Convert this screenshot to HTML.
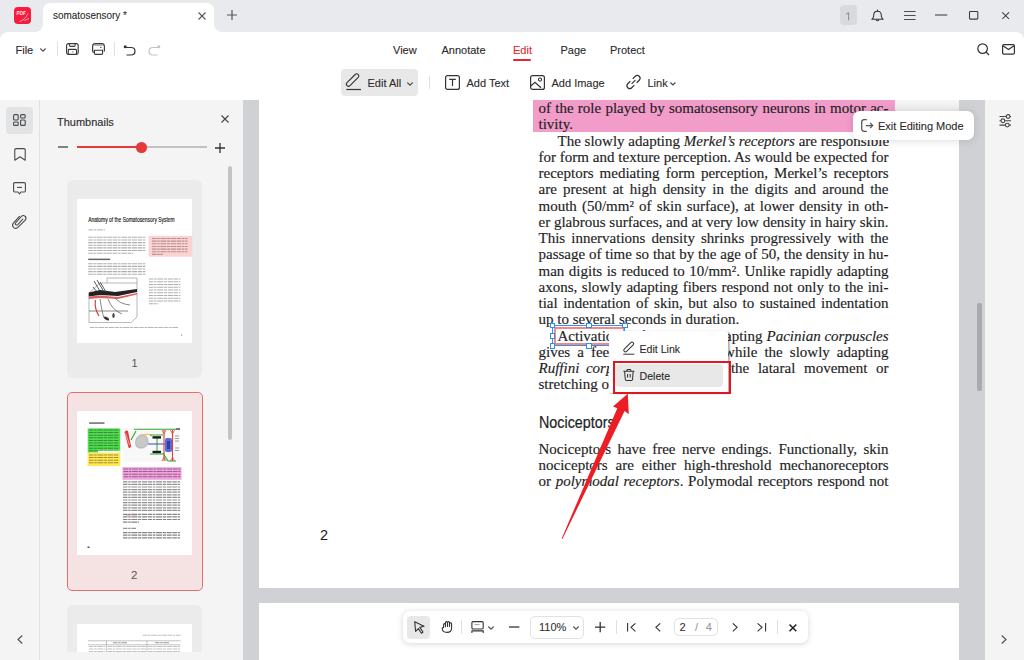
<!DOCTYPE html>
<html><head><meta charset="utf-8">
<style>
*{box-sizing:border-box;margin:0;padding:0}
html,body{width:1024px;height:660px;overflow:hidden;background:#e9eaed;font-family:"Liberation Sans",sans-serif;color:#333}
.a{position:absolute}
svg{position:absolute;overflow:visible}
.t{position:absolute;white-space:pre;font-size:11px;line-height:13px;color:#2a2a2a;-webkit-text-stroke:0.1px currentColor}
.ln{position:absolute;left:538.5px;width:350px;-webkit-text-stroke:0.15px #1e1e1e;white-space:nowrap;font-family:"Liberation Serif",serif;font-size:15px;line-height:18px;color:#1e1e1e;text-align:justify;text-align-last:justify}
.ln.l{text-align:left;text-align-last:left}
i{font-style:italic}
</style></head><body>
<!-- title bar -->
<div class="a" style="left:0;top:0;width:1024px;height:32px;background:#e9eaed"></div>
<!-- logo -->

<!-- tab -->
<div class="a" style="left:43px;top:3px;width:171px;height:30px;background:#fff;border-radius:7px 7px 0 0"></div>
<div class="t" style="left:52.5px;top:9px;font-size:11px;color:#2a2a2a;transform:scaleX(0.9);transform-origin:0 0">somatosensory *</div>

<!-- toolbar white -->
<div class="a" style="left:0;top:32px;width:1024px;height:68px;background:#fff;border-radius:8px 8px 0 0"></div>
<div class="a" style="left:0;top:99.5px;width:1024px;height:1px;background:#e6e6e6"></div>


<!-- tab flare corners -->
<div class="a" style="left:35px;top:24px;width:8px;height:8.5px;background:radial-gradient(circle at 0 0,#e9eaed 7.6px,#fff 8.4px)"></div>
<div class="a" style="left:214px;top:24px;width:8px;height:8.5px;background:radial-gradient(circle at 100% 0,#e9eaed 7.6px,#fff 8.4px)"></div>
<!-- logo detail -->
<svg style="left:13.5px;top:6.5px" width="17" height="17" viewBox="0 0 17 17"><defs><linearGradient id="lg" x1="0" y1="0" x2="1" y2="1"><stop offset="0" stop-color="#ff1a3c"/><stop offset="1" stop-color="#ee1e3e"/></linearGradient></defs><rect x="0" y="0" width="17" height="17" rx="4" fill="url(#lg)"/><text x="2.6" y="7.6" font-family="Liberation Sans" font-size="4.6" font-style="italic" font-weight="bold" fill="#fff" opacity="0.9">PDF</text><path d="M5.5 14.5 Q11 13 14 6.5 M10.5 13.5 L15 11.5" stroke="#fff" stroke-width="0.8" fill="none" opacity="0.75"/></svg>
<!-- tab close -->
<svg style="left:197.5px;top:11.5px" width="8" height="8" viewBox="0 0 8 8"><path d="M0.5 0.5 L7.5 7.5 M7.5 0.5 L0.5 7.5" stroke="#555" stroke-width="1.1"/></svg>
<!-- plus -->
<svg style="left:226.5px;top:10px" width="10" height="10" viewBox="0 0 10 10"><path d="M5 0 V10 M0 5 H10" stroke="#555" stroke-width="1.2"/></svg>
<!-- right titlebar icons -->
<div class="a" style="left:839.7px;top:5.2px;width:17px;height:19.6px;border-radius:4px;background:#d9dadd"></div>
<svg style="left:845px;top:12px" width="6" height="9" viewBox="0 0 6 9"><path d="M3.6 0.4 V8.2 M3.6 0.6 L1.4 2.2" stroke="#8f88b5" stroke-width="1.1" fill="none"/></svg>
<svg style="left:870.5px;top:8.8px" width="13" height="13" viewBox="0 0 13 13"><path d="M0.9 10.2 Q2.6 9 2.7 7 V6.2 Q2.7 2.3 6.5 2.3 Q10.3 2.3 10.3 6.2 V7 Q10.4 9 12.1 10.2 Z" stroke="#333" stroke-width="1.05" fill="none" stroke-linejoin="round"/><path d="M6.5 0.6 V2.3" stroke="#333" stroke-width="1.1"/><path d="M5 11 Q6.5 12.6 8 11" stroke="#333" stroke-width="1.05" fill="none"/></svg>
<svg style="left:903.5px;top:10.9px" width="12" height="10" viewBox="0 0 12 10"><path d="M0 0.5 H11.6 M0 4.55 H11.6 M0 8.55 H11.6" stroke="#4b4f5a" stroke-width="1.05"/></svg>
<svg style="left:935.2px;top:14.2px" width="13" height="2" viewBox="0 0 13 2"><path d="M0 1 H12.3" stroke="#3a3a3a" stroke-width="1.05"/></svg>
<svg style="left:968.9px;top:11px" width="10" height="9" viewBox="0 0 10 9"><rect x="0.5" y="0.5" width="8.3" height="7.6" stroke="#3a3a3a" stroke-width="1.05" fill="none" rx="0.8"/></svg>
<svg style="left:1001.8px;top:11.9px" width="8" height="8" viewBox="0 0 8 8"><path d="M0.3 0.3 L7 7 M7 0.3 L0.3 7" stroke="#3a3a3a" stroke-width="1.05"/></svg>

<!-- toolbar row 1 -->
<div class="t" style="left:15.5px;top:43.5px">File</div>
<svg style="left:40px;top:48px" width="6" height="4" viewBox="0 0 6 4"><path d="M0.3 0.5 L3 3.2 L5.7 0.5" stroke="#555" stroke-width="1.1" fill="none"/></svg>
<div class="a" style="left:56.5px;top:42px;width:1px;height:13.5px;background:#e0e0e0"></div>
<svg style="left:66.2px;top:43px" width="13" height="12" viewBox="0 0 13 12"><rect x="0.6" y="0.6" width="11.6" height="10.8" rx="1.8" stroke="#3a3a3a" stroke-width="1.15" fill="none"/><path d="M3.5 0.6 V2.6 Q3.5 3.4 4.3 3.4 H8.3 Q9.1 3.4 9.1 2.6 V0.6" stroke="#3a3a3a" stroke-width="1.1" fill="none"/><path d="M2.3 11.4 V7.3 Q2.3 6.4 3.2 6.4 H9.6 Q10.5 6.4 10.5 7.3 V11.4" stroke="#3a3a3a" stroke-width="1.1" fill="none"/><circle cx="6.9" cy="8.8" r="0.6" fill="#555"/></svg>
<svg style="left:92px;top:43px" width="13" height="12" viewBox="0 0 13 12"><path d="M2.4 9.2 H1.9 Q0.6 9.2 0.6 7.9 V3.4 Q0.6 0.6 3.4 0.6 H9.6 Q12.4 0.6 12.4 3.4 V8.6" stroke="#3a3a3a" stroke-width="1.15" fill="none"/><path d="M2.4 2.1 H10.6" stroke="#777" stroke-width="1"/><path d="M2.4 7.2 H10.6 V10.3 Q10.6 11.4 9.5 11.4 H3.5 Q2.4 11.4 2.4 10.3 Z" stroke="#3a3a3a" stroke-width="1.15" fill="none"/><rect x="8" y="3.9" width="1.6" height="0.9" fill="#3a3a3a"/></svg>
<div class="a" style="left:113.5px;top:42px;width:1px;height:13.5px;background:#e0e0e0"></div>
<svg style="left:122.5px;top:44.5px" width="13" height="11" viewBox="0 0 13 11"><circle cx="2.2" cy="1.7" r="1.5" fill="#333"/><path d="M2.2 2.5 H8 Q12 2.5 12 6.3 Q12 10 8 10 H3.5" stroke="#333" stroke-width="1.2" fill="none"/></svg>
<svg style="left:147.5px;top:44.5px" width="13" height="11" viewBox="0 0 13 11"><circle cx="10.8" cy="1.7" r="1.5" fill="#c4c4c4"/><path d="M10.8 2.5 H5 Q1 2.5 1 6.3 Q1 10 5 10 H9.5" stroke="#c4c4c4" stroke-width="1.2" fill="none"/></svg>

<div class="t" style="left:393px;top:43.5px">View</div>
<div class="t" style="left:441.5px;top:43.5px">Annotate</div>
<div class="t" style="left:513px;top:43.5px;color:#e5262e">Edit</div>
<div class="a" style="left:513px;top:59px;width:17.5px;height:2.3px;border-radius:1px;background:#e5262e"></div>
<div class="t" style="left:560.5px;top:43.5px">Page</div>
<div class="t" style="left:610px;top:43.5px">Protect</div>
<svg style="left:976.5px;top:42.8px" width="13" height="13" viewBox="0 0 13 13"><circle cx="5.6" cy="5.6" r="4.8" stroke="#333" stroke-width="1.2" fill="none"/><path d="M9 9 L12 12" stroke="#333" stroke-width="1.2"/></svg>
<svg style="left:1002px;top:43.5px" width="13" height="11" viewBox="0 0 13 11"><rect x="0.6" y="0.6" width="11.8" height="9.5" rx="1.3" stroke="#333" stroke-width="1.2" fill="none"/><path d="M1 1.8 L6.5 5.5 L12 1.8" stroke="#333" stroke-width="1.2" fill="none"/></svg>

<!-- toolbar row 2 -->
<div class="a" style="left:341px;top:69.3px;width:77px;height:26.5px;border-radius:4px;background:#e8e8e8"></div>
<svg style="left:346px;top:75px" width="16" height="15" viewBox="0 0 16 15"><rect x="-1.3" y="3" width="15.8" height="4.2" rx="2.1" transform="rotate(-45 6.6 5.1)" stroke="#333" stroke-width="1.1" fill="none"/><path d="M0.3 14.5 H15" stroke="#333" stroke-width="1.2"/></svg>
<div class="t" style="left:367.5px;top:77px">Edit All</div>
<svg style="left:406.5px;top:81.5px" width="6" height="4" viewBox="0 0 6 4"><path d="M0.3 0.5 L3 3.2 L5.7 0.5" stroke="#555" stroke-width="1.1" fill="none"/></svg>
<div class="a" style="left:428.5px;top:76px;width:1px;height:13px;background:#e0e0e0"></div>
<svg style="left:445px;top:75px" width="15" height="15" viewBox="0 0 15 15"><rect x="0.6" y="0.6" width="13.8" height="13.8" rx="2" stroke="#333" stroke-width="1.2" fill="none"/><path d="M4.2 4.3 H10.8 M7.5 4.3 V11" stroke="#333" stroke-width="1.2"/></svg>
<div class="t" style="left:466.5px;top:77px">Add Text</div>
<svg style="left:530px;top:75px" width="15" height="15" viewBox="0 0 15 15"><rect x="0.6" y="0.6" width="13.8" height="13.8" rx="2" stroke="#333" stroke-width="1.2" fill="none"/><circle cx="10" cy="4.6" r="1.6" stroke="#333" stroke-width="1.1" fill="none"/><path d="M0.8 11 L5 7.3 L11 12.8" stroke="#333" stroke-width="1.2" fill="none"/></svg>
<div class="t" style="left:551.5px;top:77px">Add Image</div>
<svg style="left:626px;top:75.4px" width="15" height="14" viewBox="0 0 15 14"><g transform="rotate(-45 7.5 7)" stroke="#333" stroke-width="1.2" fill="none"><path d="M5.8 4.2 H2.2 a2.8 2.8 0 0 0 0 5.6 H5.8"/><path d="M9.2 4.2 H12.8 a2.8 2.8 0 0 1 0 5.6 H9.2"/><path d="M4.8 7 H10.2"/></g></svg>
<div class="t" style="left:647.5px;top:77px">Link</div>
<svg style="left:669.8px;top:81.8px" width="6" height="4" viewBox="0 0 6 4"><path d="M0.4 0.5 L2.9 3 L5.4 0.5" stroke="#444" stroke-width="1.1" fill="none"/></svg>

<!-- left rail + panel -->
<div class="a" style="left:0;top:100px;width:243px;height:560px;background:#f4f4f4"></div>
<div class="a" style="left:39px;top:100px;width:1px;height:560px;background:#e2e2e2"></div>

<!-- left rail icons -->
<div class="a" style="left:6px;top:107px;width:27px;height:27px;border-radius:4px;background:#e2e3e5"></div>
<svg style="left:13px;top:114.3px" width="13" height="13" viewBox="0 0 13 13"><rect x="0.6" y="0.6" width="4.6" height="5.4" rx="1" stroke="#4a4a4a" stroke-width="1.1" fill="none"/><rect x="7.6" y="0.6" width="4.6" height="3.4" rx="1" stroke="#4a4a4a" stroke-width="1.1" fill="none"/><rect x="0.6" y="8" width="4.6" height="3.4" rx="1" stroke="#4a4a4a" stroke-width="1.1" fill="none"/><rect x="7.6" y="6" width="4.6" height="5.4" rx="1" stroke="#4a4a4a" stroke-width="1.1" fill="none"/></svg>
<svg style="left:13.5px;top:147.5px" width="12" height="13" viewBox="0 0 12 13"><path d="M0.8 1.8 Q0.8 0.6 2 0.6 H10 Q11.2 0.6 11.2 1.8 V12.2 L6 8.8 L0.8 12.2 Z" stroke="#4a4a4a" stroke-width="1.1" fill="none" stroke-linejoin="round"/></svg>
<svg style="left:13px;top:182px" width="13" height="13" viewBox="0 0 13 13"><path d="M1.8 0.6 H11.2 Q12.4 0.6 12.4 1.8 V8.8 Q12.4 10 11.2 10 H8 L6.5 11.8 L5 10 H1.8 Q0.6 10 0.6 8.8 V1.8 Q0.6 0.6 1.8 0.6 Z" stroke="#4a4a4a" stroke-width="1.1" fill="none" stroke-linejoin="round"/><path d="M4 5.4 H9" stroke="#4a4a4a" stroke-width="1.1"/></svg>
<svg style="left:8px;top:208px" width="24" height="26" viewBox="0 0 24 26"><path d="M11.4 8.3 L5.2 15.4 Q3.6 17.8 5.8 19.6 Q8 21.3 10.2 19.2 L17.2 12.2 Q19 10 17 8.2 Q15 6.6 13.2 8.6 L7.6 15 Q6.9 16.2 7.9 16.9 Q8.8 17.6 9.8 16.6 L14.8 11.2" stroke="#4a4a4a" stroke-width="1.1" fill="none" stroke-linecap="round"/></svg>
<svg style="left:17px;top:634.5px" width="6" height="9" viewBox="0 0 6 9"><path d="M5.3 0.5 L1 4.5 L5.3 8.5" stroke="#555" stroke-width="1.2" fill="none"/></svg>

<!-- thumbnails panel -->
<div class="t" style="left:57px;top:116px">Thumbnails</div>
<svg style="left:221px;top:115px" width="8" height="8" viewBox="0 0 8 8"><path d="M0.5 0.5 L7.5 7.5 M7.5 0.5 L0.5 7.5" stroke="#444" stroke-width="1.1"/></svg>
<svg style="left:58px;top:146px" width="11" height="2" viewBox="0 0 11 2"><path d="M0 1 H10" stroke="#444" stroke-width="1.3"/></svg>
<div class="a" style="left:77px;top:146.3px;width:64px;height:2px;background:#e5393b"></div>
<div class="a" style="left:141px;top:146.4px;width:65.5px;height:1.8px;background:#c2c2c2"></div>
<div class="a" style="left:136.2px;top:142.1px;width:10.6px;height:10.6px;border-radius:50%;background:#e5393b"></div>
<svg style="left:215px;top:142.5px" width="10" height="10" viewBox="0 0 10 10"><path d="M5 0 V10 M0 5 H10" stroke="#333" stroke-width="1.3"/></svg>
<div class="a" style="left:227.8px;top:166px;width:4.6px;height:273.5px;border-radius:2.3px;background:#c4c4c4"></div>

<!-- card 1 -->
<div class="a" style="left:67px;top:179.5px;width:135px;height:198px;border-radius:6px;background:#ebebeb"></div>
<div class="a" style="left:77px;top:198.6px;width:115.3px;height:144.2px;background:#fff"></div>
<div class="t" style="left:131.5px;top:356.5px;color:#555;-webkit-text-stroke:0">1</div>
<!-- card 2 -->
<div class="a" style="left:66.5px;top:392px;width:136px;height:199px;border-radius:5px;background:#f5e3e4;border:1.2px solid #e86e6e"></div>
<div class="a" style="left:77px;top:411.3px;width:115.3px;height:144px;background:#fff"></div>
<div class="t" style="left:131px;top:568.5px;font-size:11.5px;color:#555;-webkit-text-stroke:0">2</div>
<!-- card 3 -->
<div class="a" style="left:67px;top:604.6px;width:135px;height:47.7px;border-radius:6px 6px 0 0;background:#ebebeb"></div>
<div class="a" style="left:77px;top:624px;width:115.3px;height:28.3px;background:#fff"></div>

<svg style="left:0;top:0" width="243" height="660" viewBox="0 0 243 660"><text x="88.2" y="222" font-family="Liberation Sans" font-size="6.3" fill="#111" stroke="#111" stroke-width="0.12" textLength="86.5" lengthAdjust="spacingAndGlyphs">Anatomy of the Somatosensory System</text><path d="M88.5 229.85 h16.5" stroke="#999" stroke-width="1.23" stroke-dasharray="4.5 0.7 2.5 0.7 6 0.7 3.2 0.7 5 0.7" opacity="0.62"/><path d="M88.2 237.30 h57.8" stroke="#7d7d7d" stroke-width="1.1" stroke-dasharray="4.5 0.7 2.5 0.7 6 0.7 3.2 0.7 5 0.7" opacity="0.62"/><path d="M88.2 239.95 h57.8" stroke="#7d7d7d" stroke-width="1.1" stroke-dasharray="4.5 0.7 2.5 0.7 6 0.7 3.2 0.7 5 0.7" opacity="0.62"/><path d="M88.2 242.60 h57.8" stroke="#7d7d7d" stroke-width="1.1" stroke-dasharray="4.5 0.7 2.5 0.7 6 0.7 3.2 0.7 5 0.7" opacity="0.62"/><path d="M88.2 245.25 h57.8" stroke="#7d7d7d" stroke-width="1.1" stroke-dasharray="4.5 0.7 2.5 0.7 6 0.7 3.2 0.7 5 0.7" opacity="0.62"/><path d="M88.2 247.90 h57.8" stroke="#7d7d7d" stroke-width="1.1" stroke-dasharray="4.5 0.7 2.5 0.7 6 0.7 3.2 0.7 5 0.7" opacity="0.62"/><path d="M88.2 250.55 h57.8" stroke="#7d7d7d" stroke-width="1.1" stroke-dasharray="4.5 0.7 2.5 0.7 6 0.7 3.2 0.7 5 0.7" opacity="0.62"/><path d="M88.2 253.20 h45.1" stroke="#7d7d7d" stroke-width="1.1" stroke-dasharray="4.5 0.7 2.5 0.7 6 0.7 3.2 0.7 5 0.7" opacity="0.62"/><rect x="148.6" y="235.8" width="43.7" height="20.9" fill="#fdd2d2"/><path d="M152.0 238.50 h35.5" stroke="#8a6a6a" stroke-width="1.14" stroke-dasharray="4.5 0.7 2.5 0.7 6 0.7 3.2 0.7 5 0.7" opacity="0.62"/><path d="M152.0 241.15 h35.5" stroke="#8a6a6a" stroke-width="1.14" stroke-dasharray="4.5 0.7 2.5 0.7 6 0.7 3.2 0.7 5 0.7" opacity="0.62"/><path d="M152.0 243.80 h35.5" stroke="#8a6a6a" stroke-width="1.14" stroke-dasharray="4.5 0.7 2.5 0.7 6 0.7 3.2 0.7 5 0.7" opacity="0.62"/><path d="M152.0 246.45 h35.5" stroke="#8a6a6a" stroke-width="1.14" stroke-dasharray="4.5 0.7 2.5 0.7 6 0.7 3.2 0.7 5 0.7" opacity="0.62"/><path d="M152.0 249.10 h35.5" stroke="#8a6a6a" stroke-width="1.14" stroke-dasharray="4.5 0.7 2.5 0.7 6 0.7 3.2 0.7 5 0.7" opacity="0.62"/><path d="M152.0 251.75 h35.5" stroke="#8a6a6a" stroke-width="1.14" stroke-dasharray="4.5 0.7 2.5 0.7 6 0.7 3.2 0.7 5 0.7" opacity="0.62"/><path d="M152.0 254.40 h10.7" stroke="#8a6a6a" stroke-width="1.14" stroke-dasharray="4.5 0.7 2.5 0.7 6 0.7 3.2 0.7 5 0.7" opacity="0.62"/><rect x="88.2" y="258.6" width="22" height="1.5" fill="#666"/><path d="M88.2 263.75 h57.8" stroke="#7d7d7d" stroke-width="1.1" stroke-dasharray="4.5 0.7 2.5 0.7 6 0.7 3.2 0.7 5 0.7" opacity="0.62"/><path d="M88.2 266.37 h57.8" stroke="#7d7d7d" stroke-width="1.1" stroke-dasharray="4.5 0.7 2.5 0.7 6 0.7 3.2 0.7 5 0.7" opacity="0.62"/><path d="M88.2 268.99 h57.8" stroke="#7d7d7d" stroke-width="1.1" stroke-dasharray="4.5 0.7 2.5 0.7 6 0.7 3.2 0.7 5 0.7" opacity="0.62"/><path d="M88.2 271.61 h57.8" stroke="#7d7d7d" stroke-width="1.1" stroke-dasharray="4.5 0.7 2.5 0.7 6 0.7 3.2 0.7 5 0.7" opacity="0.62"/><path d="M88.2 274.23 h57.8" stroke="#7d7d7d" stroke-width="1.1" stroke-dasharray="4.5 0.7 2.5 0.7 6 0.7 3.2 0.7 5 0.7" opacity="0.62"/><path d="M89 322.5 H131 L137 317 V281 M89 322.5 V293 L100 283 H137 M107 283 V278 H137 V281" stroke="#999" stroke-width="0.7" fill="none"/><path d="M88.8 292.5 L100 290 L115 292 L137 289 L137 292 L118 296 L100 295 L88.8 296.5 Z" fill="#222"/><path d="M88.8 296.5 L100 295.5 L118 297 L137 293 L137 294.5 L118 299 L100 298 L88.8 299 Z" fill="#e06060"/><path d="M94 281 L101 293 M97 280 L104 292 M100 282 L106 292 M93 287 L98 293" stroke="#333" stroke-width="0.8"/><path d="M100 299 Q102 312 104 318 M108 299 Q112 310 122 314 M115 298 Q120 304 130 305 M89 311 H128" stroke="#555" stroke-width="0.7" fill="none"/><ellipse cx="106.5" cy="318.5" rx="3" ry="1.4" fill="#333" transform="rotate(30 106.5 318.5)"/><ellipse cx="113.5" cy="315.5" rx="1.2" ry="2.6" fill="#444"/><path d="M95.5 300 Q94 308 99 316" stroke="#d04040" stroke-width="1.2" fill="none"/><path d="M148.9 279.00 h31.5" stroke="#7d7d7d" stroke-width="1.14" stroke-dasharray="4.5 0.7 2.5 0.7 6 0.7 3.2 0.7 5 0.7" opacity="0.62"/><path d="M148.9 281.75 h31.5" stroke="#7d7d7d" stroke-width="1.14" stroke-dasharray="4.5 0.7 2.5 0.7 6 0.7 3.2 0.7 5 0.7" opacity="0.62"/><path d="M148.9 284.50 h31.5" stroke="#7d7d7d" stroke-width="1.14" stroke-dasharray="4.5 0.7 2.5 0.7 6 0.7 3.2 0.7 5 0.7" opacity="0.62"/><path d="M148.9 287.25 h31.5" stroke="#7d7d7d" stroke-width="1.14" stroke-dasharray="4.5 0.7 2.5 0.7 6 0.7 3.2 0.7 5 0.7" opacity="0.62"/><path d="M148.9 290.00 h31.5" stroke="#7d7d7d" stroke-width="1.14" stroke-dasharray="4.5 0.7 2.5 0.7 6 0.7 3.2 0.7 5 0.7" opacity="0.62"/><path d="M148.9 292.75 h31.5" stroke="#7d7d7d" stroke-width="1.14" stroke-dasharray="4.5 0.7 2.5 0.7 6 0.7 3.2 0.7 5 0.7" opacity="0.62"/><path d="M148.9 295.50 h31.5" stroke="#7d7d7d" stroke-width="1.14" stroke-dasharray="4.5 0.7 2.5 0.7 6 0.7 3.2 0.7 5 0.7" opacity="0.62"/><path d="M148.9 298.25 h31.5" stroke="#7d7d7d" stroke-width="1.14" stroke-dasharray="4.5 0.7 2.5 0.7 6 0.7 3.2 0.7 5 0.7" opacity="0.62"/><path d="M148.9 301.00 h31.5" stroke="#7d7d7d" stroke-width="1.14" stroke-dasharray="4.5 0.7 2.5 0.7 6 0.7 3.2 0.7 5 0.7" opacity="0.62"/><path d="M148.9 303.75 h9.4" stroke="#7d7d7d" stroke-width="1.14" stroke-dasharray="4.5 0.7 2.5 0.7 6 0.7 3.2 0.7 5 0.7" opacity="0.62"/><path d="M89.9 327.55 h88.2" stroke="#8a8a8a" stroke-width="1.04" stroke-dasharray="4.5 0.7 2.5 0.7 6 0.7 3.2 0.7 5 0.7" opacity="0.62"/><rect x="181" y="334.5" width="1.2" height="1.2" fill="#999"/><rect x="89.1" y="422.5" width="15.4" height="1.1" fill="#333"/><rect x="87.7" y="428.4" width="32.6" height="24.2" fill="#4fdc4f"/><path d="M89.0 430.00 h30.0" stroke="#2a5a2a" stroke-width="1.04" stroke-dasharray="4.5 0.7 2.5 0.7 6 0.7 3.2 0.7 5 0.7" opacity="0.62"/><path d="M89.0 432.60 h30.0" stroke="#2a5a2a" stroke-width="1.04" stroke-dasharray="4.5 0.7 2.5 0.7 6 0.7 3.2 0.7 5 0.7" opacity="0.62"/><path d="M89.0 435.20 h30.0" stroke="#2a5a2a" stroke-width="1.04" stroke-dasharray="4.5 0.7 2.5 0.7 6 0.7 3.2 0.7 5 0.7" opacity="0.62"/><path d="M89.0 437.80 h30.0" stroke="#2a5a2a" stroke-width="1.04" stroke-dasharray="4.5 0.7 2.5 0.7 6 0.7 3.2 0.7 5 0.7" opacity="0.62"/><path d="M89.0 440.40 h30.0" stroke="#2a5a2a" stroke-width="1.04" stroke-dasharray="4.5 0.7 2.5 0.7 6 0.7 3.2 0.7 5 0.7" opacity="0.62"/><path d="M89.0 443.00 h30.0" stroke="#2a5a2a" stroke-width="1.04" stroke-dasharray="4.5 0.7 2.5 0.7 6 0.7 3.2 0.7 5 0.7" opacity="0.62"/><path d="M89.0 445.60 h30.0" stroke="#2a5a2a" stroke-width="1.04" stroke-dasharray="4.5 0.7 2.5 0.7 6 0.7 3.2 0.7 5 0.7" opacity="0.62"/><path d="M89.0 448.20 h30.0" stroke="#2a5a2a" stroke-width="1.04" stroke-dasharray="4.5 0.7 2.5 0.7 6 0.7 3.2 0.7 5 0.7" opacity="0.62"/><path d="M89.0 450.80 h30.0" stroke="#2a5a2a" stroke-width="1.04" stroke-dasharray="4.5 0.7 2.5 0.7 6 0.7 3.2 0.7 5 0.7" opacity="0.62"/><rect x="87.7" y="452.6" width="32.6" height="13.5" fill="#ffe850"/><rect x="98" y="450.7" width="22.3" height="2" fill="#fff"/><path d="M89.0 455.00 h30.0" stroke="#6a5a2a" stroke-width="1.04" stroke-dasharray="4.5 0.7 2.5 0.7 6 0.7 3.2 0.7 5 0.7" opacity="0.62"/><path d="M89.0 457.60 h30.0" stroke="#6a5a2a" stroke-width="1.04" stroke-dasharray="4.5 0.7 2.5 0.7 6 0.7 3.2 0.7 5 0.7" opacity="0.62"/><path d="M89.0 460.20 h30.0" stroke="#6a5a2a" stroke-width="1.04" stroke-dasharray="4.5 0.7 2.5 0.7 6 0.7 3.2 0.7 5 0.7" opacity="0.62"/><path d="M89.0 462.80 h30.0" stroke="#6a5a2a" stroke-width="1.04" stroke-dasharray="4.5 0.7 2.5 0.7 6 0.7 3.2 0.7 5 0.7" opacity="0.62"/><rect x="87.7" y="464" width="4" height="2" fill="#ffe850"/><rect x="123" y="428.4" width="57.4" height="33.2" fill="#f8f8f8"/>
<path d="M124.5 432 Q126 429.5 128 431 L131 446 Q130.5 449 128.5 447.5 Z" fill="#e03a3a"/>
<path d="M125.5 433 L129.5 445" stroke="#fff" stroke-width="0.5"/>
<path d="M131 440 L136 431 M134 429.3 H176" stroke="#2fa82f" stroke-width="1.1" fill="none"/>
<path d="M136 446 Q134 438 140 435 Q146 433 148 440 Q149 446 143 448 Q138 449 136 446 Z" fill="#c8c8c8" stroke="#888" stroke-width="0.4"/>
<path d="M141 437 Q147 432 152 436" stroke="#e8c070" stroke-width="1.2" fill="none"/>
<path d="M150 435 H163 M150 454 H163 M157 436 V453" stroke="#2fa82f" stroke-width="1" fill="none"/>
<rect x="152.5" y="436.2" width="8.5" height="2.4" fill="#1a1a1a"/><rect x="152.5" y="450.8" width="8.5" height="2.4" fill="#1a1a1a"/>
<path d="M148 444 H165" stroke="#3a4ab8" stroke-width="1"/>
<rect x="165" y="438" width="7" height="14" rx="2" fill="#5a6ad8"/>
<rect x="167" y="441" width="3" height="8" fill="#3040a0"/>
<path d="M164 430 V461 M172.5 430 V461" stroke="#d84040" stroke-width="1.1"/>
<path d="M162 430 L164 434 L166 430 M170.5 430 L172.5 434 L174.5 430 M162 461 L164 457 L166 461 M170.5 461 L172.5 457 L174.5 461" stroke="#e05050" stroke-width="0.8" fill="none"/>
<path d="M163 453 L168 461 H176" stroke="#2fa82f" stroke-width="1.1" fill="none"/>
<path d="M175 436 h4 M175 438.5 h4 M175 441 h4 M175 448 h4 M175 450.5 h4" stroke="#777" stroke-width="0.7"/>
<rect x="176" y="428.4" width="4" height="1.2" fill="#222"/>
<rect x="122.5" y="467.2" width="59" height="12.6" fill="#f3a2de"/><path d="M123.5 469.00 h57.0" stroke="#5a3a5a" stroke-width="1.04" stroke-dasharray="4.5 0.7 2.5 0.7 6 0.7 3.2 0.7 5 0.7" opacity="0.62"/><path d="M123.5 471.60 h57.0" stroke="#5a3a5a" stroke-width="1.04" stroke-dasharray="4.5 0.7 2.5 0.7 6 0.7 3.2 0.7 5 0.7" opacity="0.62"/><path d="M123.5 474.20 h57.0" stroke="#5a3a5a" stroke-width="1.04" stroke-dasharray="4.5 0.7 2.5 0.7 6 0.7 3.2 0.7 5 0.7" opacity="0.62"/><path d="M123.5 476.80 h57.0" stroke="#5a3a5a" stroke-width="1.04" stroke-dasharray="4.5 0.7 2.5 0.7 6 0.7 3.2 0.7 5 0.7" opacity="0.62"/><path d="M123.0 481.80 h57.6" stroke="#4a4a4a" stroke-width="1.23" stroke-dasharray="4.5 0.7 2.5 0.7 6 0.7 3.2 0.7 5 0.7" opacity="0.62"/><path d="M123.0 484.40 h57.6" stroke="#4a4a4a" stroke-width="1.23" stroke-dasharray="4.5 0.7 2.5 0.7 6 0.7 3.2 0.7 5 0.7" opacity="0.62"/><path d="M123.0 487.00 h57.6" stroke="#4a4a4a" stroke-width="1.23" stroke-dasharray="4.5 0.7 2.5 0.7 6 0.7 3.2 0.7 5 0.7" opacity="0.62"/><path d="M123.0 489.60 h57.6" stroke="#4a4a4a" stroke-width="1.23" stroke-dasharray="4.5 0.7 2.5 0.7 6 0.7 3.2 0.7 5 0.7" opacity="0.62"/><path d="M123.0 492.20 h57.6" stroke="#4a4a4a" stroke-width="1.23" stroke-dasharray="4.5 0.7 2.5 0.7 6 0.7 3.2 0.7 5 0.7" opacity="0.62"/><path d="M123.0 494.80 h57.6" stroke="#4a4a4a" stroke-width="1.23" stroke-dasharray="4.5 0.7 2.5 0.7 6 0.7 3.2 0.7 5 0.7" opacity="0.62"/><path d="M123.0 497.40 h57.6" stroke="#4a4a4a" stroke-width="1.23" stroke-dasharray="4.5 0.7 2.5 0.7 6 0.7 3.2 0.7 5 0.7" opacity="0.62"/><path d="M123.0 500.00 h57.6" stroke="#4a4a4a" stroke-width="1.23" stroke-dasharray="4.5 0.7 2.5 0.7 6 0.7 3.2 0.7 5 0.7" opacity="0.62"/><path d="M123.0 502.60 h57.6" stroke="#4a4a4a" stroke-width="1.23" stroke-dasharray="4.5 0.7 2.5 0.7 6 0.7 3.2 0.7 5 0.7" opacity="0.62"/><path d="M123.0 505.20 h57.6" stroke="#4a4a4a" stroke-width="1.23" stroke-dasharray="4.5 0.7 2.5 0.7 6 0.7 3.2 0.7 5 0.7" opacity="0.62"/><path d="M123.0 507.80 h57.6" stroke="#4a4a4a" stroke-width="1.23" stroke-dasharray="4.5 0.7 2.5 0.7 6 0.7 3.2 0.7 5 0.7" opacity="0.62"/><path d="M123.0 510.40 h57.6" stroke="#4a4a4a" stroke-width="1.23" stroke-dasharray="4.5 0.7 2.5 0.7 6 0.7 3.2 0.7 5 0.7" opacity="0.62"/><path d="M123.0 514.30 h57.6" stroke="#3a3a3a" stroke-width="1.23" stroke-dasharray="4.5 0.7 2.5 0.7 6 0.7 3.2 0.7 5 0.7" opacity="0.62"/><path d="M123.0 516.90 h57.6" stroke="#3a3a3a" stroke-width="1.23" stroke-dasharray="4.5 0.7 2.5 0.7 6 0.7 3.2 0.7 5 0.7" opacity="0.62"/><path d="M123.0 519.50 h57.6" stroke="#3a3a3a" stroke-width="1.23" stroke-dasharray="4.5 0.7 2.5 0.7 6 0.7 3.2 0.7 5 0.7" opacity="0.62"/><path d="M123.0 522.10 h16.1" stroke="#3a3a3a" stroke-width="1.23" stroke-dasharray="4.5 0.7 2.5 0.7 6 0.7 3.2 0.7 5 0.7" opacity="0.62"/><path d="M126.0 515.20 h11.0" stroke="#e05050" stroke-width="0.76" stroke-dasharray="4.5 0.7 2.5 0.7 6 0.7 3.2 0.7 5 0.7" opacity="0.62"/><path d="M123.0 528.30 h13.0" stroke="#555" stroke-width="1.33" stroke-dasharray="4.5 0.7 2.5 0.7 6 0.7 3.2 0.7 5 0.7" opacity="0.62"/><path d="M123.0 532.60 h57.6" stroke="#3a3a3a" stroke-width="1.23" stroke-dasharray="4.5 0.7 2.5 0.7 6 0.7 3.2 0.7 5 0.7" opacity="0.62"/><path d="M123.0 535.20 h57.6" stroke="#3a3a3a" stroke-width="1.23" stroke-dasharray="4.5 0.7 2.5 0.7 6 0.7 3.2 0.7 5 0.7" opacity="0.62"/><path d="M123.0 537.80 h57.6" stroke="#3a3a3a" stroke-width="1.23" stroke-dasharray="4.5 0.7 2.5 0.7 6 0.7 3.2 0.7 5 0.7" opacity="0.62"/><rect x="87.5" y="546.5" width="2" height="1.5" fill="#555"/><clipPath id="c3"><rect x="77" y="624" width="115.3" height="28.3"/></clipPath><g clip-path="url(#c3)"><path d="M142.8 635.20 h37.9" stroke="#999" stroke-width="1.14" stroke-dasharray="4.5 0.7 2.5 0.7 6 0.7 3.2 0.7 5 0.7" opacity="0.62"/><path d="M87.9 640.8 H180.7 M106.4 640.8 V652.3 M147 640.8 V652.3 M87.9 644.8 H180.7" stroke="#999" stroke-width="0.6"/><path d="M113.0 642.80 h14.0" stroke="#555" stroke-width="1.14" stroke-dasharray="4.5 0.7 2.5 0.7 6 0.7 3.2 0.7 5 0.7" opacity="0.62"/><path d="M155.0 642.80 h14.0" stroke="#555" stroke-width="1.14" stroke-dasharray="4.5 0.7 2.5 0.7 6 0.7 3.2 0.7 5 0.7" opacity="0.62"/><path d="M89.0 646.50 h16.0" stroke="#999" stroke-width="0.95" stroke-dasharray="4.5 0.7 2.5 0.7 6 0.7 3.2 0.7 5 0.7" opacity="0.62"/><path d="M89.0 649.00 h16.0" stroke="#999" stroke-width="0.95" stroke-dasharray="4.5 0.7 2.5 0.7 6 0.7 3.2 0.7 5 0.7" opacity="0.62"/><path d="M89.0 651.50 h16.0" stroke="#999" stroke-width="0.95" stroke-dasharray="4.5 0.7 2.5 0.7 6 0.7 3.2 0.7 5 0.7" opacity="0.62"/><path d="M107.5 646.50 h38.5" stroke="#999" stroke-width="0.95" stroke-dasharray="4.5 0.7 2.5 0.7 6 0.7 3.2 0.7 5 0.7" opacity="0.62"/><path d="M107.5 649.00 h38.5" stroke="#999" stroke-width="0.95" stroke-dasharray="4.5 0.7 2.5 0.7 6 0.7 3.2 0.7 5 0.7" opacity="0.62"/><path d="M107.5 651.50 h38.5" stroke="#999" stroke-width="0.95" stroke-dasharray="4.5 0.7 2.5 0.7 6 0.7 3.2 0.7 5 0.7" opacity="0.62"/><path d="M148.0 646.50 h32.0" stroke="#999" stroke-width="0.95" stroke-dasharray="4.5 0.7 2.5 0.7 6 0.7 3.2 0.7 5 0.7" opacity="0.62"/><path d="M148.0 649.00 h32.0" stroke="#999" stroke-width="0.95" stroke-dasharray="4.5 0.7 2.5 0.7 6 0.7 3.2 0.7 5 0.7" opacity="0.62"/><path d="M148.0 651.50 h32.0" stroke="#999" stroke-width="0.95" stroke-dasharray="4.5 0.7 2.5 0.7 6 0.7 3.2 0.7 5 0.7" opacity="0.62"/></g></svg>
<!-- doc area -->
<div class="a" style="left:243px;top:100px;width:742px;height:560px;background:#d0d1d5"></div>
<div class="a" style="left:259px;top:100px;width:700px;height:487.5px;background:#fff"></div>
<div class="a" style="left:259px;top:602.5px;width:700px;height:60px;background:#fff"></div>

<!-- pink highlight -->
<div class="a" style="left:533px;top:100px;width:362px;height:31.5px;background:#f19cc9"></div>
<div class="ln" style="top:98.74px">of the role played by somatosensory neurons in motor ac-</div>
<div class="ln l" style="top:114.74px">tivity.</div>
<div class="ln" style="top:131.54px;left:557.5px;width:331px">The slowly adapting <i>Merkel’s receptors</i> are responsible</div>
<div class="ln" style="top:147.79px">for form and texture perception. As would be expected for</div>
<div class="ln" style="top:164.04px">receptors mediating form perception, Merkel’s receptors</div>
<div class="ln" style="top:180.29px">are present at high density in the digits and around the</div>
<div class="ln" style="top:196.54px">mouth (50/mm² of skin surface), at lower density in oth-</div>
<div class="ln" style="top:212.79px">er glabrous surfaces, and at very low density in hairy skin.</div>
<div class="ln" style="top:229.04px">This innervations density shrinks progressively with the</div>
<div class="ln" style="top:245.29px">passage of time so that by the age of 50, the density in hu-</div>
<div class="ln" style="top:261.54px">man digits is reduced to 10/mm². Unlike rapidly adapting</div>
<div class="ln" style="top:277.79px">axons, slowly adapting fibers respond not only to the ini-</div>
<div class="ln" style="top:294.04px">tial indentation of skin, but also to sustained indentation</div>
<div class="ln l" style="top:310.29px">up to several seconds in duration.</div>
<div class="ln" style="top:326.54px;left:557.5px;width:205px">Activation of rapidly adapting</div>
<div class="ln" style="top:326.54px;left:766.5px;width:122px"><i>Pacinian corpuscles</i></div>
<div class="ln" style="top:342.79px">gives a feeling of vibration, while the slowly adapting</div>
<div class="ln" style="top:359.04px;width:184px"><i>Ruffini corpuscles</i> respond to</div>
<div class="ln" style="top:359.04px;left:730.9px;width:157.6px">the lataral movement or</div>
<div class="ln l" style="top:375.29px">stretching of skin.</div>
<div class="ln" style="top:439.94px">Nociceptors have free nerve endings. Functionally, skin</div>
<div class="ln" style="top:456.19px">nociceptors are either high-threshold mechanoreceptors</div>
<div class="ln" style="top:472.44px">or <i>polymodal receptors</i>. Polymodal receptors respond not</div>
<div class="a" style="left:539px;top:414.2px;font-size:16px;line-height:18px;color:#1e1e1e;-webkit-text-stroke:0.2px #1e1e1e;white-space:nowrap;transform:scaleX(0.895);transform-origin:0 0">Nociceptors</div>
<div class="a" style="left:320px;top:527px;font-size:14.5px;line-height:16px;color:#1e1e1e">2</div>


<!-- selection box -->
<div class="a" style="left:553.5px;top:326.8px;width:71px;height:17.8px;border:2px solid #f08a8a"></div>
<div class="a" style="left:552.3px;top:325.2px;width:73px;height:21px;border:1px solid #3a90e6"></div>
<div class="a" style="left:549.8px;top:322.6px;width:5.4px;height:5.4px;background:#fff;border:1.1px solid #2f8ee8"></div>
<div class="a" style="left:586.3px;top:322.6px;width:5.4px;height:5.4px;background:#fff;border:1.1px solid #2f8ee8"></div>
<div class="a" style="left:622.4px;top:322.6px;width:5.4px;height:5.4px;background:#fff;border:1.1px solid #2f8ee8"></div>
<div class="a" style="left:549.8px;top:333.2px;width:5.4px;height:5.4px;background:#fff;border:1.1px solid #2f8ee8"></div>
<div class="a" style="left:549.8px;top:343.3px;width:5.4px;height:5.4px;background:#fff;border:1.1px solid #2f8ee8"></div>
<div class="a" style="left:586.3px;top:343.3px;width:5.4px;height:5.4px;background:#fff;border:1.1px solid #2f8ee8"></div>

<!-- popup -->
<div class="a" style="left:609.3px;top:330.7px;width:118.5px;height:62px;background:#fff;border-radius:2px;box-shadow:1.5px 1px 1.5px rgba(0,0,0,0.28),0 0 1.5px rgba(0,0,0,0.18)"></div>
<svg style="left:623px;top:342.6px" width="12" height="12" viewBox="0 0 12 12"><rect x="-0.6" y="2.3" width="12.6" height="3.4" rx="1.7" transform="rotate(-45 5.7 4)" stroke="#333" stroke-width="1" fill="none"/><path d="M0.3 11.2 H11.3" stroke="#333" stroke-width="1"/></svg>
<div class="t" style="left:639.5px;top:342.8px;font-size:10.6px">Edit Link</div>
<div class="a" style="left:615px;top:363.5px;width:108px;height:23.5px;border-radius:4px;background:#e8e8e8"></div>
<svg style="left:623px;top:369px" width="12" height="12" viewBox="0 0 12 12"><path d="M0.4 2.3 H11.4 M4 2.3 V1.2 Q4 0.5 4.7 0.5 H7.1 Q7.8 0.5 7.8 1.2 V2.3" stroke="#333" stroke-width="1.05" fill="none"/><path d="M1.6 2.3 L2.3 10.5 Q2.4 11.4 3.3 11.4 H8.5 Q9.4 11.4 9.5 10.5 L10.2 2.3" stroke="#333" stroke-width="1.05" fill="none"/><path d="M4.6 5 V8.5 M7.2 5 V8.5" stroke="#333" stroke-width="1.05"/></svg>
<div class="t" style="left:639.5px;top:369.8px;font-size:10.6px">Delete</div>
<div class="a" style="left:613px;top:360.7px;width:117.6px;height:33.1px;border:2px solid #e2161f"></div>

<!-- arrow -->
<svg style="left:0;top:0" width="1024" height="660" viewBox="0 0 1024 660"><path d="M561.6 538.8 L617.3 408.2 L613.0 406.6 L627.8 393.8 L628.8 414.3 L624.6 410.9 L562.4 539.0 Z" fill="#ee1c25"/></svg>

<!-- exit editing mode -->
<div class="a" style="left:895px;top:100px;width:64px;height:10.5px;background:linear-gradient(#f6f6f6,#ececec)"></div>
<div class="a" style="left:852.5px;top:110.9px;width:121.3px;height:29.4px;background:#fff;border-radius:7px;box-shadow:0 1px 8px rgba(0,0,0,0.13)"></div>
<svg style="left:861px;top:119.3px" width="13" height="13" viewBox="0 0 13 13"><path d="M5.8 0.7 H3.2 Q0.7 0.7 0.7 3.2 V9.8 Q0.7 12.3 3.2 12.3 H5.8" stroke="#555" stroke-width="1.25" fill="none"/><path d="M4.8 6.5 H11.6 M9.1 3.9 L11.7 6.5 L9.1 9.1" stroke="#555" stroke-width="1.25" fill="none"/></svg>
<div class="t" style="left:878px;top:120px">Exit Editing Mode</div>

<!-- doc scrollbar -->
<div class="a" style="left:977px;top:303.2px;width:4.9px;height:87.4px;border-radius:2px;background:#a9aaae"></div>

<!-- right rail -->
<div class="a" style="left:985px;top:100px;width:39px;height:560px;background:#f4f4f4"></div>


<svg style="left:998.5px;top:113px" width="13" height="15" viewBox="0 0 13 15"><path d="M0.5 3.5 H7.2 M11 3.5 H12 M0.5 7.8 H2 M5.8 7.8 H12 M0.5 12.1 H6.4 M10.2 12.1 H12" stroke="#444" stroke-width="1.1"/><circle cx="9.1" cy="3.5" r="1.9" stroke="#444" stroke-width="1.1" fill="none"/><circle cx="3.9" cy="7.8" r="1.9" stroke="#444" stroke-width="1.1" fill="none"/><circle cx="8.3" cy="12.1" r="1.9" stroke="#444" stroke-width="1.1" fill="none"/></svg>
<svg style="left:1001px;top:634.5px" width="6" height="9" viewBox="0 0 6 9"><path d="M0.7 0.5 L5 4.5 L0.7 8.5" stroke="#555" stroke-width="1.2" fill="none"/></svg>

<!-- bottom toolbar -->
<div class="a" style="left:403.2px;top:610.7px;width:404.8px;height:32.3px;background:#fff;border-radius:7px;box-shadow:0 1px 6px rgba(0,0,0,0.16)"></div>
<div class="a" style="left:407.2px;top:615.5px;width:23.3px;height:23.2px;border-radius:4px;background:#e8e8e8"></div>
<svg style="left:413.8px;top:620.8px" width="11" height="13" viewBox="0 0 11 13"><path d="M0.7 0.7 L10 5.2 L5.8 6.4 L9 11 L7.4 12.2 L4.3 7.6 L1.6 10.3 Z" stroke="#333" stroke-width="1.1" fill="none" stroke-linejoin="round"/></svg>
<svg style="left:440.5px;top:620.8px" width="12" height="12" viewBox="0 0 12 12"><path d="M2.6 6.4 V3.6 Q2.6 2.6 3.6 2.6 Q4.5 2.6 4.5 3.6 V5.6 M4.5 3.6 V1.6 Q4.5 0.6 5.5 0.6 Q6.5 0.6 6.5 1.6 V5.4 M6.5 1.6 Q6.5 0.6 7.5 0.6 Q8.5 0.6 8.5 1.6 V5.4 M8.5 2.8 Q8.5 1.9 9.5 1.9 Q10.6 1.9 10.6 3 V7 Q10.6 11.4 6 11.4 Q1.2 11.4 1.2 7.4 Q1.2 6.4 2.6 6.4" stroke="#333" stroke-width="1.1" fill="none" stroke-linejoin="round" stroke-linecap="round"/></svg>
<div class="a" style="left:461.3px;top:620.4px;width:1px;height:13.3px;background:#e0e0e0"></div>
<svg style="left:470.6px;top:620.8px" width="13" height="13" viewBox="0 0 13 13"><rect x="0.9" y="0.6" width="11.3" height="7.4" rx="1.2" stroke="#333" stroke-width="1.1" fill="none"/><path d="M3.5 3.6 H8.6" stroke="#aaa" stroke-width="1.2"/><path d="M0.9 11.9 V9.9 H12.2 V11.9" stroke="#333" stroke-width="1.1" fill="none"/></svg>
<svg style="left:487.8px;top:625.5px" width="6" height="4" viewBox="0 0 6 4"><path d="M0.3 0.5 L3 3.2 L5.7 0.5" stroke="#555" stroke-width="1.1" fill="none"/></svg>
<svg style="left:508.9px;top:626px" width="11" height="2" viewBox="0 0 11 2"><path d="M0 1 H10.3" stroke="#333" stroke-width="1.3"/></svg>
<div class="a" style="left:529.7px;top:615.5px;width:54.8px;height:23.2px;border-radius:5px;border:1px solid #e2e2e2"></div>
<div class="t" style="left:539px;top:621px;color:#333">110%</div>
<svg style="left:572.9px;top:625.5px" width="6" height="4" viewBox="0 0 6 4"><path d="M0.3 0.5 L3 3.2 L5.7 0.5" stroke="#555" stroke-width="1.1" fill="none"/></svg>
<svg style="left:594.8px;top:622px" width="11" height="11" viewBox="0 0 11 11"><path d="M5.2 0 V10.3 M0 5.1 H10.3" stroke="#333" stroke-width="1.3"/></svg>
<div class="a" style="left:615.5px;top:620.4px;width:1px;height:13.3px;background:#e0e0e0"></div>
<svg style="left:626.5px;top:623px" width="9" height="9" viewBox="0 0 9 9"><path d="M0.6 0 V8.6 M8.4 0.3 L4 4.3 L8.4 8.3" stroke="#333" stroke-width="1.1" fill="none"/></svg>
<svg style="left:654.8px;top:623px" width="6" height="9" viewBox="0 0 6 9"><path d="M5.2 0.3 L0.9 4.3 L5.2 8.3" stroke="#333" stroke-width="1.1" fill="none"/></svg>
<div class="a" style="left:673.8px;top:617.6px;width:44.7px;height:18.9px;border-radius:5px;border:1px solid #e2e2e2"></div>
<div class="t" style="left:679.5px;top:621.3px;color:#333">2</div>
<div class="t" style="left:695px;top:621.3px;color:#999">/</div>
<div class="t" style="left:705.8px;top:621.3px;color:#999">4</div>
<svg style="left:731.8px;top:623px" width="6" height="9" viewBox="0 0 6 9"><path d="M0.8 0.3 L5.1 4.3 L0.8 8.3" stroke="#333" stroke-width="1.1" fill="none"/></svg>
<svg style="left:757.1px;top:623px" width="10" height="9" viewBox="0 0 10 9"><path d="M0.6 0.3 L5 4.3 L0.6 8.3 M8.6 0 V8.6" stroke="#333" stroke-width="1.1" fill="none"/></svg>
<div class="a" style="left:776.5px;top:620.4px;width:1px;height:13.3px;background:#e0e0e0"></div>
<svg style="left:788.7px;top:623.6px" width="8" height="8" viewBox="0 0 8 8"><path d="M0.5 0.5 L7.3 7.3 M7.3 0.5 L0.5 7.3" stroke="#222" stroke-width="1.5"/></svg>

</body></html>
